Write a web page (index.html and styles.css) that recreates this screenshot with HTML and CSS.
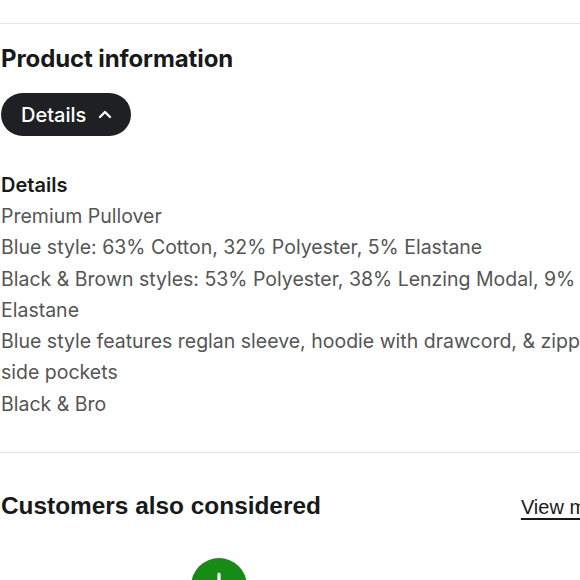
FILE: index.html
```html
<!DOCTYPE html>
<html>
<head>
<meta charset="utf-8">
<link rel="stylesheet" href="styles.css">
</head>
<body>
<div class="page">
  <div class="divider first"></div>
  <section class="product-info">
    <h2 class="section-title">Product information</h2>
    <button class="pill">Details
      <svg class="chev" width="14" height="10" viewBox="0 0 14 10"><path d="M2 8 L7 3 L12 8" fill="none" stroke="#fff" stroke-width="2.4" stroke-linecap="round" stroke-linejoin="round"/></svg>
    </button>
    <div class="details">
      <h3 class="details-title">Details</h3>
      <p class="details-text">Premium Pullover<br>Blue style: 63% Cotton, 32% Polyester, 5% Elastane<br>Black &amp; Brown styles: 53% Polyester, 38% Lenzing Modal, 9% Elastane<br>Blue style features reglan sleeve, hoodie with drawcord, &amp; zippered side pockets<br>Black &amp; Bro</p>
    </div>
  </section>
  <div class="divider"></div>
  <section class="also">
    <div class="also-head">
      <h2 class="section-title alt">Customers also considered</h2>
      <a class="view-more" href="#">View more</a>
    </div>
    <div class="cards">
      <div class="card">
        <svg class="add" width="28" height="28" viewBox="0 0 28 28"><path d="M14 2 V26 M2 14 H26" stroke="#fff" stroke-width="3.2" stroke-linecap="round"/></svg>
      </div>
    </div>
  </section>
</div>
</body>
</html>
```

FILE: styles.css
```css
html, body {
  margin: 0;
  padding: 0;
  background: #fff;
  overflow: hidden;
}
.page {
  width: 640px;
  padding-left: 1px;
  font-family: Inter, "Liberation Sans", sans-serif;
  color: #191919;
}
.divider {
  height: 1px;
  background: #e5e5e5;
  margin: 0 0 0 -1px;
}
.divider.first {
  margin-top: 23px;
}
.section-title {
  margin: 0;
  font-size: 24px;
  font-weight: 700;
  line-height: 30px;
  letter-spacing: -0.1px;
}
.product-info {
  padding-top: 20px;
  padding-bottom: 32px;
}
.pill {
  display: inline-flex;
  align-items: center;
  gap: 12px;
  margin-top: 19px;
  height: 43px;
  padding: 0 19px 0 20px;
  border: 0;
  border-radius: 22px;
  background: #1f2024;
  color: #fff;
  font-family: Inter, "Liberation Sans", sans-serif;
  font-size: 20px;
  font-weight: 500;
}
.chev { display: block; margin-top: -2px; }
.details {
  margin-top: 34px;
}
.details-title {
  margin: 0;
  font-size: 20px;
  font-weight: 600;
  line-height: 30px;
}
.details-text {
  margin: 0;
  margin-top: 1px;
  font-size: 19.5px;
  line-height: 31.3px;
  color: #555;
}
.also {
  padding-top: 38px;
}
.also-head {
  display: flex;
  justify-content: space-between;
  align-items: baseline;
  width: 614px;
}
.section-title.alt {
  font-family: "Liberation Sans", Arial, sans-serif;
  font-size: 24.4px;
  letter-spacing: 0;
}
.view-more {
  font-family: "Liberation Sans", Arial, sans-serif;
  font-size: 20px;
  color: #191919;
  text-decoration: underline;
  text-underline-offset: 4px;
}
.cards {
  padding-top: 37px;
  padding-left: 190px;
}
.card {
  width: 56px;
  height: 56px;
  border-radius: 50%;
  background: #168b16;
  display: flex;
  justify-content: center;
  align-items: center;
}
.add {
  display: block;
}
```
